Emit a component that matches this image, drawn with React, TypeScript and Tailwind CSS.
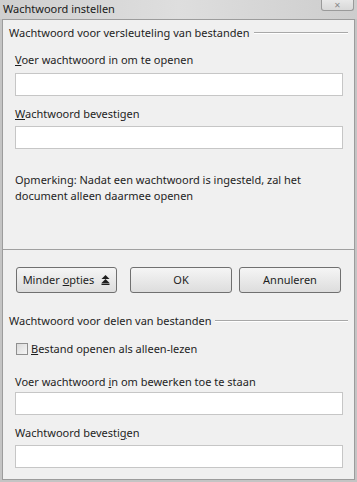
import React from 'react';

const font = { fontFamily: '"Noto Sans", "Open Sans", sans-serif' };

function Label({ children, className }: { children: React.ReactNode; className?: string }) {
  return (
    <div className={`ml-[12px] h-[16px] leading-[16px] text-[11px] text-[#1e1e1e] ${className ?? ''}`}>{children}</div>
  );
}

function Input({ className }: { className?: string }) {
  return <div className={`ml-[12px] mr-[11px] h-[23px] border border-[#c6c6c6] bg-white ${className ?? ''}`} />;
}

function GroupTitle({ title, className }: { title: string; className?: string }) {
  return (
    <div className={`flex items-center gap-[4px] pl-[6px] pr-[6px] h-[16px] ${className ?? ''}`}>
      <span className="text-[11px] leading-[16px] text-[#1e1e1e] whitespace-nowrap">{title}</span>
      <div className="flex-1 h-[2px] border-t border-[#a8a8a8] border-b border-b-white" />
    </div>
  );
}

function DialogButton({ children, className }: { children: React.ReactNode; className?: string }) {
  return (
    <button className={`h-[26px] rounded-[3px] border border-[#707070] bg-gradient-to-b from-[#f5f5f5] to-[#dddddd] text-[11px] text-[#1e1e1e] ${className ?? ''}`}>
      {children}
    </button>
  );
}

export default function App() {
  return (
    <div className="w-[357px] h-[482px] bg-[#c4c4c4] flex flex-col overflow-hidden" style={font}>
      {/* Title bar */}
      <div className="h-[19px] flex items-start bg-gradient-to-r from-[#cfcfcf] via-[#dedede] to-[#cdcdcd] relative">
        <span className="pl-[3px] pt-[1px] text-[11px] leading-[16px] text-[#1a1a1a]">Wachtwoord instellen</span>
        <div className="absolute right-[3px] top-0 w-[33px] h-[11px] rounded-b-[3px] border border-t-0 border-[#9a9a9a] bg-gradient-to-b from-[#e8e8e8] to-[#d8d8d8] flex items-center justify-center">
          <span className="text-[8px] leading-[8px] text-[#8a8a8a]">✕</span>
        </div>
      </div>

      {/* Dialog body */}
      <div className="h-[461px] mx-[2px] border border-[#9c9c9c] bg-[#f0f0f0] flex flex-col">
        <GroupTitle title="Wachtwoord voor versleuteling van bestanden" className="mt-[5px]" />
        <Label className="mt-[11px]"><span className="underline">V</span>oer wachtwoord in om te openen</Label>
        <Input className="mt-[5px]" />
        <Label className="mt-[10px]"><span className="underline">W</span>achtwoord bevestigen</Label>
        <Input className="mt-[4px]" />
        <p className="ml-[12px] mr-[11px] mt-[23px] text-[11px] leading-[16px] text-[#1e1e1e]">
          Opmerking: Nadat een wachtwoord is ingesteld, zal het document alleen daarmee openen
        </p>
        <div className="mt-[45px] h-px bg-[#a0a0a0]" />

        <div className="flex pl-[13px] mt-[17px]">
          <DialogButton className="w-[101px] flex items-center justify-center gap-[7px]">
            <span>Minder <span className="underline">o</span>pties</span>
            <svg width="9" height="10" viewBox="0 0 9 10">
              <path d="M4.5 0L8.5 4H0.5z M4.5 4L8.5 8H0.5z" fill="#1e1e1e" />
              <rect x="0.5" y="8.5" width="8" height="1.5" fill="#1e1e1e" />
            </svg>
          </DialogButton>
          <DialogButton className="ml-[13px] w-[102px]">OK</DialogButton>
          <DialogButton className="ml-[7px] w-[102px]">Annuleren</DialogButton>
        </div>

        <GroupTitle title="Wachtwoord voor delen van bestanden" className="mt-[20px]" />
        <label className="flex items-center gap-[3px] ml-[13px] mt-[12px] h-[16px] text-[11px] leading-[16px] text-[#1e1e1e]">
          <span className="w-[12px] h-[12px] border border-[#8f8f8f] bg-gradient-to-br from-[#dadada] to-[#f6f6f6]" />
          <span><span className="underline">B</span>estand openen als alleen-lezen</span>
        </label>
        <Label className="mt-[17px]">Voer wachtwoord <span className="underline">i</span>n om bewerken toe te staan</Label>
        <Input className="mt-[2px]" />
        <Label className="mt-[10px]">Wachtwoord bevesti<span className="underline">g</span>en</Label>
        <Input className="mt-[4px]" />
      </div>
    </div>
  );
}
